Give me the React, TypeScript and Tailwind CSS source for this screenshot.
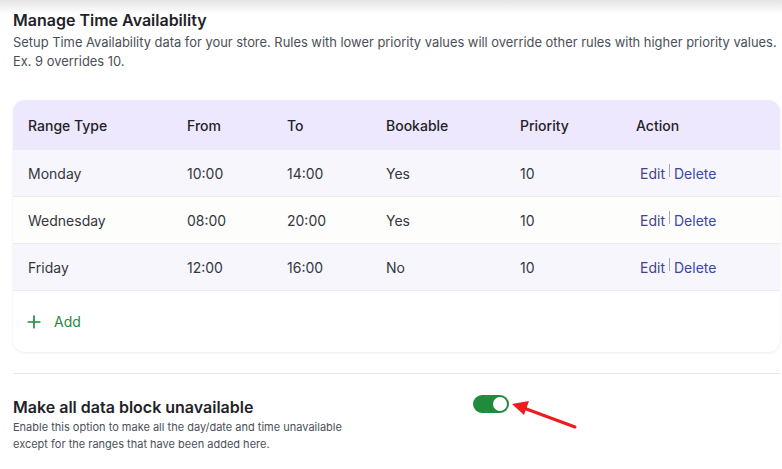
import { Plus } from 'lucide-react';

type Rule = {
    rangeType: string;
    from: string;
    to: string;
    bookable: string;
    priority: number;
};

const rules: Rule[] = [
    { rangeType: 'Monday', from: '10:00', to: '14:00', bookable: 'Yes', priority: 10 },
    { rangeType: 'Wednesday', from: '08:00', to: '20:00', bookable: 'Yes', priority: 10 },
    { rangeType: 'Friday', from: '12:00', to: '16:00', bookable: 'No', priority: 10 },
];

const cols = ['w-[159px]', 'w-[100px]', 'w-[99px]', 'w-[134px]', 'w-[116px]'];

function Toggle() {
    return (
        <button type="button" className="flex h-[18px] w-[36px] items-center justify-end rounded-full bg-[#1f8b3b] px-[2px]">
            <span className="h-[14px] w-[14px] rounded-full bg-white" />
        </button>
    );
}

export default function App() {
    return (
        <div className="relative min-h-[469px] w-full bg-white font-['Inter',sans-serif]">
            {/* shadow from the bar above */}
            <div className="pointer-events-none absolute top-0 left-0 h-[14px] w-full bg-gradient-to-b from-[#e4e4e6] to-white" />

            <div className="relative pt-[10px] pr-[2px] pl-[13px]">
                {/* Heading */}
                <h2 className="text-[16px] leading-[20px] font-semibold text-[#1f2328]">Manage Time Availability</h2>
                <p className="mt-[3px] text-[12.9px] leading-[19px] whitespace-nowrap text-[#4b5058]">
                    Setup Time Availability data for your store. Rules with lower priority values will override other rules with higher priority values.
                    <br />
                    Ex. 9 overrides 10.
                </p>

                {/* Table card */}
                <div className="mt-[29px] overflow-hidden rounded-[12px] bg-white shadow-[0_1px_3px_rgba(0,0,0,0.08)]">
                    <div className="flex h-[50px] items-center bg-[#ede8fd] pl-[15px] text-[14px] font-medium text-[#1f2328]">
                        <div className={cols[0]}>Range Type</div>
                        <div className={cols[1]}>From</div>
                        <div className={cols[2]}>To</div>
                        <div className={cols[3]}>Bookable</div>
                        <div className={cols[4]}>Priority</div>
                        <div>Action</div>
                    </div>

                    {rules.map((rule, i) => (
                        <div
                            key={rule.rangeType}
                            className={`flex h-[47px] items-center border-b border-[#ececf0] pl-[15px] text-[14px] text-[#33373d] ${
                                i % 2 === 0 ? 'bg-[#f7f6fd]' : 'bg-[#fdfdfb]'
                            }`}
                        >
                            <div className={cols[0]}>{rule.rangeType}</div>
                            <div className={cols[1]}>{rule.from}</div>
                            <div className={cols[2]}>{rule.to}</div>
                            <div className={cols[3]}>{rule.bookable}</div>
                            <div className={cols[4]}>{rule.priority}</div>
                            <div className="flex items-center pl-[4px]">
                                <a className="text-[#45428a]">Edit</a>
                                <span className="mr-[4px] ml-[4px] mb-[6px] h-[13px] w-px bg-[#a8a8b0]" />
                                <a className="text-[#3b47a8]">Delete</a>
                            </div>
                        </div>
                    ))}

                    <div className="flex h-[61px] items-center pl-[11px]">
                        <button type="button" className="flex items-center gap-[10px] text-[14px] text-[#1f8b3b]">
                            <Plus size={20} strokeWidth={2} className="text-[#1f8b3b]" />
                            Add
                        </button>
                    </div>
                </div>

                <div className="mt-[21px] h-px w-full bg-[#e6e6e8]" />

                {/* Block unavailable */}
                <div className="mt-[23px] flex items-start">
                    <div className="w-[460px]">
                        <h3 className="text-[16px] leading-[20px] font-semibold text-[#1f2328]">Make all data block unavailable</h3>
                        <p className="mt-[2px] text-[11px] leading-[17px] text-[#4b5058]">
                            Enable this option to make all the day/date and time unavailable
                            <br />
                            except for the ranges that have been added here.
                        </p>
                    </div>
                    <div className="relative mt-[-2px]">
                        <Toggle />
                        <svg className="absolute top-[4px] left-[36px]" width="70" height="32" viewBox="0 0 70 32">
                            <line x1="66" y1="28" x2="12" y2="8" stroke="#ee1c1c" strokeWidth="3" strokeLinecap="round" />
                            <polygon points="3,5 20,2 15,16" fill="#ee1c1c" />
                        </svg>
                    </div>
                </div>
            </div>
        </div>
    );
}
